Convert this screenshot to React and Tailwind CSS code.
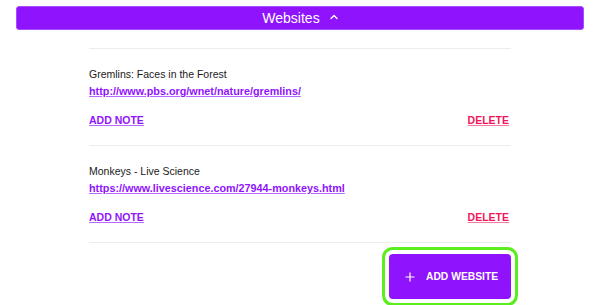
import React from 'react';

const websites = [
  {
    id: 1,
    title: 'Gremlins: Faces in the Forest',
    url: 'http://www.pbs.org/wnet/nature/gremlins/',
  },
  {
    id: 2,
    title: 'Monkeys - Live Science',
    url: 'https://www.livescience.com/27944-monkeys.html',
  },
];

const WebsiteItem = ({ site }) => (
  <div className="border-b border-[#ececec] pt-[17px] pb-[16px]">
    <p className="text-[10.5px] leading-[17px] text-[#1a1a1a]">{site.title}</p>
    <a
      href="#"
      className="block text-[10.8px] leading-[17px] font-bold text-[#9013fe] underline decoration-[#b869ff]"
    >
      {site.url}
    </a>
    <div className="mt-3 flex items-center justify-between pr-[2px] text-[10.5px] leading-[17px] font-bold">
      <a href="#" className="text-[#9013fe] underline decoration-[#b869ff]">
        ADD NOTE
      </a>
      <a href="#" className="text-[#f0145a] underline decoration-[#f57aa0]">
        DELETE
      </a>
    </div>
  </div>
);

const App = () => {
  return (
    <div className="w-[600px] h-[305px] overflow-hidden bg-white font-['Liberation_Sans',Arial,sans-serif]">
      <div className="px-4 pt-[6px]">
        <button className="flex h-[24px] w-full items-center justify-center gap-[10px] rounded-[3px] border border-[#a64dfc] bg-[#9013fe] text-[14px] text-white">
          <span>Websites</span>
          <svg width="8" height="6" viewBox="0 0 8 6" fill="none" className="mt-[-2px]">
            <path d="M1 4.5L4 1.5L7 4.5" stroke="white" strokeWidth="1.4" strokeLinecap="round" strokeLinejoin="round" />
          </svg>
        </button>
      </div>

      <div className="mx-auto mt-[18px] w-[422px] border-t border-[#ececec]">
        {websites.map(site => (
          <WebsiteItem key={site.id} site={site} />
        ))}
        <div className="mt-[11px] flex justify-end">
          <button className="flex h-[45px] w-[122px] items-center gap-[11px] rounded-[4px] bg-[#9013fe] pl-[16px] text-[10.3px] font-bold text-white ring-[3px] ring-[#5ced1f] ring-offset-[4px] ring-offset-white">
            <svg width="10" height="10" viewBox="0 0 10 10" fill="none">
              <path d="M5 0.5V9.5M0.5 5H9.5" stroke="white" strokeWidth="1.2" />
            </svg>
            <span>ADD WEBSITE</span>
          </button>
        </div>
      </div>
    </div>
  );
};

export default App;
